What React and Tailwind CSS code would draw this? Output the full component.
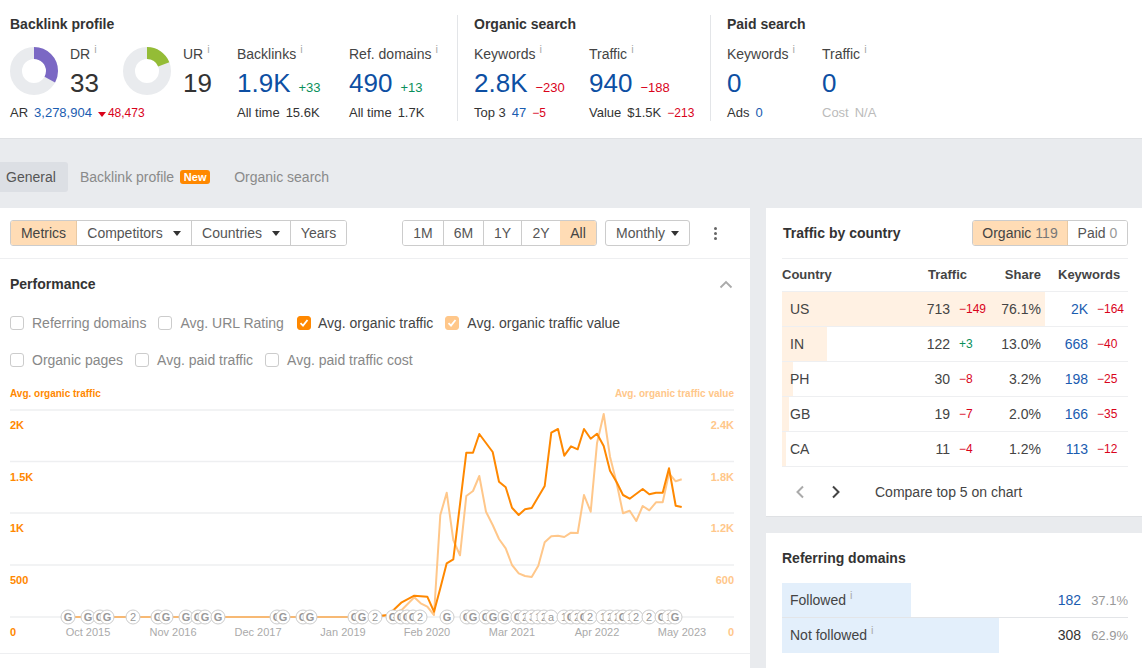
import React from "react";

const font = { fontFamily: '"Liberation Sans", Arial, sans-serif' };

function I() {
  return <span className="relative top-[-6px] ml-[4px] text-[11px] leading-none text-[#aaa]">i</span>;
}

function Donut({ pct, color }) {
  return (
    <svg width="48" height="48" viewBox="0 0 48 48" className="block shrink-0">
      <circle cx="24" cy="24" r="18" fill="none" stroke="#e9ebee" strokeWidth="12" />
      <circle cx="24" cy="24" r="18" fill="none" stroke={color} strokeWidth="12" pathLength="100" strokeDasharray={`${pct} 100`} transform="rotate(-90 24 24)" />
    </svg>
  );
}

function Metric({ label, value, delta, deltaColor, children, width, grey }) {
  return (
    <div className={width}>
      <div className="h-[18px] text-[14px] leading-[18px] text-[#444]">{label}<I /></div>
      <div className="mt-[5px] flex h-[30px] items-baseline gap-[8px]">
        <span className="text-[26px] leading-[30px] text-[#0d4fa3]">{value}</span>
        {delta && <span className="text-[13px] leading-none" style={{ color: deltaColor }}>{delta}</span>}
      </div>
      <div className={`mt-[6px] flex h-[18px] items-center gap-[6px] text-[13px] leading-[18px] ${grey ? "text-[#bbb]" : "text-[#333]"}`}>{children}</div>
    </div>
  );
}

const RED = "#d9031b";
const GREEN = "#0a8f5b";

function Segment({ children, active, className = "" }) {
  return <div className={`flex h-full items-center justify-center text-[14px] ${active ? "bg-[#ffdcb5] text-[#444]" : "bg-white text-[#555]"} ${className}`}>{children}</div>;
}

function Caret() {
  return <span className="ml-[10px] inline-block h-0 w-0 border-x-[4px] border-t-[5px] border-x-transparent border-t-[#333]" />;
}

function Check({ state, children, className = "" }) {
  const box = state === 1 ? "border-[#ff8800] bg-[#ff8800]" : state === 2 ? "border-[#ffc78a] bg-[#ffc78a]" : "border-[#ccc] bg-white";
  return (
    <div className={`flex items-center text-[14px] leading-[18px] ${state ? "text-[#444]" : "text-[#888]"} ${className}`}>
      <span className={`flex h-[14px] w-[14px] items-center justify-center rounded-[3px] border ${box}`}>
        {state ? (
          <svg width="10" height="10" viewBox="0 0 10 10"><path d="M1.5 5.2 4 7.6 8.5 2" fill="none" stroke="#fff" strokeWidth="1.8" /></svg>
        ) : null}
      </span>
      {children}
    </div>
  );
}

const dark = [[0,648],[25,645],[65,607],[103,587],[142,590],[162,635],[181,565],[200,490],[220,478],[259,158],[279,158],[298,102],[338,156],[357,245],[377,262],[396,323],[416,345],[435,328],[455,324],[494,258],[514,98],[534,87],[553,167],[573,139],[593,148],[612,87],[632,116],[651,101],[671,138],[690,212],[710,247],[729,285],[749,296],[788,267],[808,283],[828,278],[848,278],[867,205],[887,317],[905,321]];
const light = [[0,648],[25,645],[65,630],[103,592],[122,610],[142,620],[162,645],[181,345],[200,278],[220,420],[240,466],[259,288],[279,273],[298,228],[318,335],[338,375],[357,417],[377,445],[396,495],[416,520],[435,528],[455,531],[475,497],[494,427],[514,409],[534,407],[553,411],[573,398],[593,399],[612,285],[632,335],[651,130],[671,42],[690,170],[710,250],[729,340],[749,332],[769,363],[788,318],[808,331],[828,307],[848,307],[867,220],[887,244],[905,238]];
const toPts = (a) => a.map(([x, y]) => `${(380 + x / 3).toFixed(1)},${(400 + y / 3).toFixed(1)}`).join(" ");

const markers = [[68,"G"],[88,"G"],[100,"G"],[107,"G"],[133,"2"],[158,"G"],[166,"G"],[186,"G"],[198,"G"],[205,"G"],[218,"G"],[277,"G"],[283,"G"],[303,"G"],[310,"G"],[355,"G"],[362,"G"],[375,"2"],[393,"G"],[401,"G"],[407,"G"],[413,"G"],[420,"2"],[447,"G"],[467,"G"],[473,"G"],[486,"G"],[493,"G"],[505,"G"],[518,"G"],[525,"2"],[532,"3"],[538,"1"],[544,"2"],[551,"a"],[564,"1"],[571,"G"],[577,"2"],[584,"G"],[590,"2"],[603,"1"],[610,"2"],[617,"2"],[623,"G"],[630,"1"],[636,"2"],[649,"2"],[662,"G"],[669,"1"],[675,"G"]];

function Chart() {
  const grid = [410, 461.5, 513, 565, 617];
  return (
    <svg width="750" height="268" viewBox="0 385 750 268" className="block" style={font}>
      {grid.map((y) => <line key={y} x1="10" x2="734" y1={y} y2={y} stroke="#eeeff1" strokeWidth="1.5" />)}
      <text x="10" y="397" fontSize="10" fontWeight="700" fill="#ff8800">Avg. organic traffic</text>
      <text x="734" y="397" fontSize="10" fontWeight="700" fill="#ffc78a" textAnchor="end">Avg. organic traffic value</text>
      {[["2K",429],["1.5K",481],["1K",532],["500",584],["0",636]].map(([t, y]) => (
        <text key={t} x="10" y={y} fontSize="11" fontWeight="700" fill="#ff8800">{t}</text>
      ))}
      {[["2.4K",429],["1.8K",481],["1.2K",532],["600",584],["0",636]].map(([t, y]) => (
        <text key={t} x="734" y={y} fontSize="11" fontWeight="700" fill="#ffc78a" textAnchor="end">{t}</text>
      ))}
      {[["Oct 2015",88],["Nov 2016",173],["Dec 2017",258],["Jan 2019",343],["Feb 2020",427],["Mar 2021",512],["Apr 2022",597],["May 2023",682]].map(([t, x]) => (
        <text key={t} x={x} y="636" fontSize="11" fill="#aaa" textAnchor="middle">{t}</text>
      ))}
      <line x1="68" x2="382" y1="617" y2="617" stroke="#f7b974" strokeWidth="2" />
      <polyline points={toPts(light)} fill="none" stroke="#ffc78a" strokeWidth="2" strokeLinejoin="round" />
      <polyline points={toPts(dark)} fill="none" stroke="#ff8800" strokeWidth="2" strokeLinejoin="round" />
      {markers.map(([x, t], i) => (
        <g key={i}>
          <circle cx={x} cy="617" r="7" fill="#fff" stroke="#ccc" strokeWidth="1" />
          <text x={x} y="621" fontSize="11" fontWeight={t === "G" ? 700 : 400} fill="#999" textAnchor="middle">{t}</text>
        </g>
      ))}
    </svg>
  );
}

const rows = [
  ["US", "713", "−149", "76.1%", "2K", "−164", 263],
  ["IN", "122", "+3", "13.0%", "668", "−40", 45],
  ["PH", "30", "−8", "3.2%", "198", "−25", 11],
  ["GB", "19", "−7", "2.0%", "166", "−35", 7],
  ["CA", "11", "−4", "1.2%", "113", "−12", 4],
];

function CountryRow({ r }) {
  return (
    <div className="relative grid h-[35px] grid-cols-[122px_46px_52px_39px_47px_1fr] items-center border-b border-[#eeeff1] text-[14px] text-[#444]">
      <div className="absolute inset-y-0 left-0 bg-[#fff1e3]" style={{ width: r[6] }} />
      <div className="relative pl-[8px]">{r[0]}</div>
      <div className="relative text-right">{r[1]}</div>
      <div className="relative pl-[9px] text-[12px]" style={{ color: r[2][0] === "+" ? GREEN : RED }}>{r[2]}</div>
      <div className="relative whitespace-nowrap text-right" dir="rtl"><span dir="ltr">{r[3]}</span></div>
      <div className="relative text-right text-[#1a5cb0]">{r[4]}</div>
      <div className="relative pl-[9px] text-[12px]" style={{ color: RED }}>{r[5]}</div>
    </div>
  );
}

function RefRow({ label, w, value, pct, link, border }) {
  return (
    <div className={`relative flex h-[35px] items-center justify-between text-[14px] ${border ? "border-b border-[#e3e5e8]" : ""}`}>
      <div className="absolute inset-y-0 left-0 bg-[#e3effb]" style={{ width: w }} />
      <div className="relative pl-[8px] text-[#444]">{label}<I /></div>
      <div className="relative flex items-baseline gap-[10px]">
        <span className={link ? "text-[#1a5cb0]" : "text-[#333]"}>{value}</span>
        <span className="text-[13px] text-[#999]">{pct}</span>
      </div>
    </div>
  );
}

export default function App() {
  return (
    <div className="h-[668px] w-[1142px] overflow-hidden bg-[#e9ebee]" style={font}>
      {/* Top metrics */}
      <header className="flex h-[139px] items-start border-b border-[#dfe1e4] bg-white pt-[15px]">
        <section className="h-[106px] w-[457px] pl-[10px]">
          <h2 className="h-[18px] text-[14px] font-bold leading-[18px] text-[#333]">Backlink profile</h2>
          <div className="mt-[12px] flex">
            <div className="w-[227px]">
              <div className="flex h-[53px]">
                <div className="flex w-[113px] gap-[12px]">
                  <div className="mt-[2px]"><Donut pct={33} color="#7b68c4" /></div>
                  <div>
                    <div className="h-[18px] text-[14px] leading-[18px] text-[#444]">DR<I /></div>
                    <div className="mt-[5px] text-[26px] leading-[30px] text-[#333]">33</div>
                  </div>
                </div>
                <div className="flex w-[114px] gap-[12px]">
                  <div className="mt-[2px]"><Donut pct={19} color="#94bc36" /></div>
                  <div>
                    <div className="h-[18px] text-[14px] leading-[18px] text-[#444]">UR<I /></div>
                    <div className="mt-[5px] text-[26px] leading-[30px] text-[#333]">19</div>
                  </div>
                </div>
              </div>
              <div className="mt-[6px] flex h-[18px] items-center text-[13px] leading-[18px] text-[#333]">
                <span>AR</span>
                <span className="ml-[6px] text-[#1a5cb0]">3,278,904</span>
                <span className="ml-[6px] mt-[2px] inline-block h-0 w-0 border-x-[4px] border-t-[5px] border-x-transparent border-t-[#d9031b]" />
                <span className="ml-[2px] text-[12px] text-[#d9031b]">48,473</span>
              </div>
            </div>
            <Metric width="w-[112px]" label="Backlinks" value="1.9K" delta="+33" deltaColor={GREEN}>
              <span>All time</span><span>15.6K</span>
            </Metric>
            <Metric width="w-[98px]" label="Ref. domains" value="490" delta="+13" deltaColor={GREEN}>
              <span>All time</span><span>1.7K</span>
            </Metric>
          </div>
        </section>

        <section className="h-[106px] w-[253px] border-l border-[#e3e5e8] pl-[16px]">
          <h2 className="h-[18px] text-[14px] font-bold leading-[18px] text-[#333]">Organic search</h2>
          <div className="mt-[12px] flex">
            <Metric width="w-[115px]" label="Keywords" value="2.8K" delta="−230" deltaColor={RED}>
              <span>Top 3</span><span className="text-[#1a5cb0]">47</span><span className="text-[12px] text-[#d9031b]">−5</span>
            </Metric>
            <Metric width="w-[120px]" label="Traffic" value="940" delta="−188" deltaColor={RED}>
              <span>Value</span><span>$1.5K</span><span className="text-[12px] text-[#d9031b]">−213</span>
            </Metric>
          </div>
        </section>

        <section className="h-[106px] border-l border-[#e3e5e8] pl-[16px]">
          <h2 className="h-[18px] text-[14px] font-bold leading-[18px] text-[#333]">Paid search</h2>
          <div className="mt-[12px] flex">
            <Metric width="w-[95px]" label="Keywords" value="0">
              <span>Ads</span><span className="text-[#1a5cb0]">0</span>
            </Metric>
            <Metric width="w-[80px]" label="Traffic" value="0" grey>
              <span>Cost</span><span>N/A</span>
            </Metric>
          </div>
        </section>
      </header>

      {/* Tabs */}
      <nav className="mt-[23px] flex h-[30px] items-center text-[14px] text-[#8a8a8a]">
        <div className="flex h-full w-[68px] items-center rounded-r-[3px] bg-[#dcdfe4] pl-[6px] text-[#555]">General</div>
        <div className="ml-[12px]">Backlink profile</div>
        <div className="ml-[6px] flex h-[14px] w-[30px] items-center justify-center rounded-[3px] bg-[#ff8800] text-[11px] font-bold text-white">New</div>
        <div className="ml-[24px]">Organic search</div>
      </nav>

      <div className="mt-[16px] flex gap-[16px]">
        {/* Left panel */}
        <main className="h-[460px] w-[750px] bg-white">
          <div className="flex h-[51px] items-start justify-between border-b border-[#eeeff1] pl-[10px] pr-[32px] pt-[12px]">
            <div className="flex h-[26px] w-[337px] overflow-hidden rounded-[3px] border border-[#ccc]">
              <Segment active className="w-[66px] border-r border-[#e8c9a4]">Metrics</Segment>
              <Segment className="w-[115px] border-r border-[#ccc]">Competitors<Caret /></Segment>
              <Segment className="w-[99px] border-r border-[#ccc]">Countries<Caret /></Segment>
              <Segment className="flex-1">Years</Segment>
            </div>
            <div className="flex items-center">
              <div className="flex h-[26px] w-[195px] overflow-hidden rounded-[3px] border border-[#ccc]">
                <Segment className="w-[41px] border-r border-[#ccc]">1M</Segment>
                <Segment className="w-[40px] border-r border-[#ccc]">6M</Segment>
                <Segment className="w-[38px] border-r border-[#ccc]">1Y</Segment>
                <Segment className="w-[38px]">2Y</Segment>
                <Segment active className="flex-1">All</Segment>
              </div>
              <div className="ml-[8px] flex h-[26px] w-[85px] items-center justify-center rounded-[3px] border border-[#ccc] text-[14px] text-[#555]">
                Monthly<span className="ml-[6px] inline-block h-0 w-0 border-x-[4px] border-t-[5px] border-x-transparent border-t-[#333]" />
              </div>
              <div className="ml-[22px] flex h-[26px] w-[6px] flex-col items-center justify-center gap-[2px]">
                <span className="h-[3px] w-[3px] rounded-full bg-[#666]" />
                <span className="h-[3px] w-[3px] rounded-full bg-[#666]" />
                <span className="h-[3px] w-[3px] rounded-full bg-[#666]" />
              </div>
            </div>
          </div>

          <div className="flex h-[50px] items-center justify-between pl-[10px] pr-[17px]">
            <h3 className="text-[14px] font-bold text-[#333]">Performance</h3>
            <svg width="14" height="9" viewBox="0 0 14 9"><path d="M1.5 7.5 7 2l5.500 5.500" fill="none" stroke="#aaa" strokeWidth="1.8" /></svg>
          </div>

          <div className="mt-[5px] flex h-[18px] items-center pl-[10px]">
            <Check className="gap-[8px]">Referring domains</Check>
            <Check className="ml-[12px] gap-[8px]">Avg. URL Rating</Check>
            <Check state={1} className="ml-[13px] gap-[7px]">Avg. organic traffic</Check>
            <Check state={2} className="ml-[12px] gap-[8px]">Avg. organic traffic value</Check>
          </div>
          <div className="mt-[19px] flex h-[18px] items-center pl-[10px]">
            <Check className="gap-[8px]">Organic pages</Check>
            <Check className="ml-[12px] gap-[8px]">Avg. paid traffic</Check>
            <Check className="ml-[12px] gap-[8px]">Avg. paid traffic cost</Check>
          </div>

          <div className="mt-[16px] border-b border-[#eeeff1]"><Chart /></div>
        </main>

        {/* Right column */}
        <aside className="flex w-[376px] flex-col gap-[16px]">
          <div className="h-[309px] border-b border-[#dfe1e4] bg-white pl-[16px] pr-[14px]">
            <div className="flex h-[50px] items-start justify-between pt-[12px]">
              <h3 className="pl-[1px] pt-[4px] text-[14px] font-bold leading-[18px] text-[#333]">Traffic by country</h3>
              <div className="flex h-[26px] w-[156px] overflow-hidden rounded-[3px] border border-[#ccc]">
                <Segment active className="w-[95px] border-r border-[#e8c9a4]">Organic<span className="ml-[4px] text-[#777]">119</span></Segment>
                <Segment className="flex-1">Paid<span className="ml-[4px] text-[#999]">0</span></Segment>
              </div>
            </div>
            <div className="grid h-[34px] grid-cols-[146px_38px_75px_1fr] items-center border-y border-[#eeeff1] text-[13px] font-bold text-[#444]">
              <div>Country</div>
              <div className="col-start-2">Traffic</div>
              <div className="text-right">Share</div>
              <div className="pl-[17px]">Keywords</div>
            </div>
            {rows.map((r) => <CountryRow key={r[0]} r={r} />)}
            <div className="flex h-[50px] items-center text-[14px] text-[#444]">
              <svg width="10" height="14" viewBox="0 0 10 14" className="ml-[13px]"><path d="M8 1.500 2.500 7 8 12.500" fill="none" stroke="#aaa" strokeWidth="2" /></svg>
              <svg width="10" height="14" viewBox="0 0 10 14" className="ml-[26px]"><path d="M2 1.500 7.500 7 2 12.500" fill="none" stroke="#444" strokeWidth="2" /></svg>
              <span className="ml-[34px]">Compare top 5 on chart</span>
            </div>
          </div>

          <div className="h-[135px] bg-white pl-[16px] pr-[14px]">
            <h3 className="flex h-[50px] items-center text-[14px] font-bold text-[#333]">Referring domains</h3>
            <RefRow label="Followed" w={129} value="182" pct="37.1%" link border />
            <RefRow label="Not followed" w={217} value="308" pct="62.9%" />
          </div>
        </aside>
      </div>
    </div>
  );
}
